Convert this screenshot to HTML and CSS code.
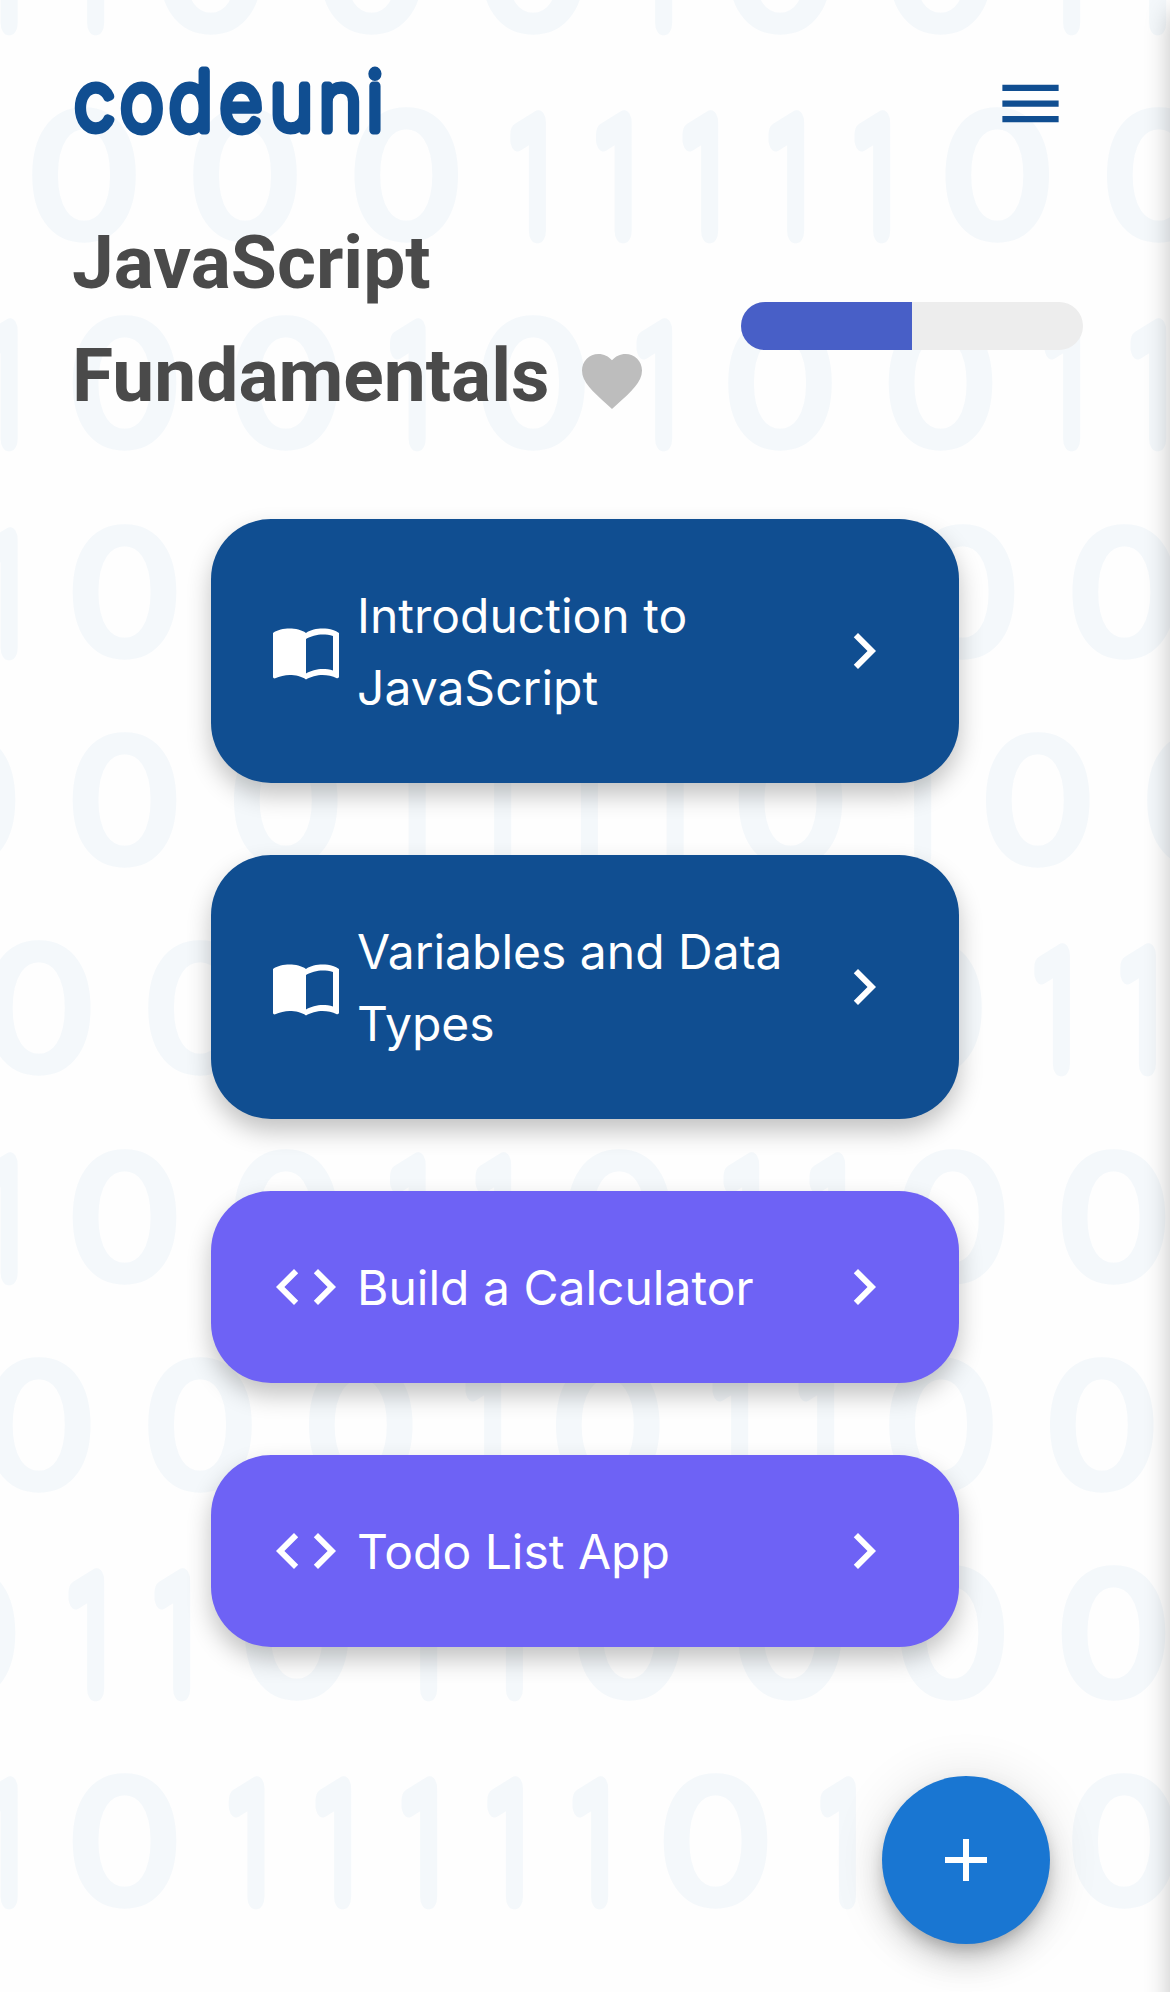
FILE: index.html
```html
<!DOCTYPE html>
<html lang="en">
<head>
<meta charset="utf-8">
<title>codeuni – JavaScript Fundamentals</title>
<link rel="stylesheet" href="styles.css">
</head>
<body>
<div class="page">
  <svg class="binary" viewBox="0 0 1170 1992" aria-hidden="true">
    <g transform="translate(0 24.7)"><text class="zero" x="180.9 318.3 456.4 667.5 804.8">00000</text><text class="one" x="27.5 171.7 1118.3 1798.3 1941.7">11111</text></g>
    <g transform="translate(0 233)"><text class="zero" x="72.6 210.3 348.1 853.2 991.2">00000</text><text class="one" x="907.7 1050.8 1195 1338.3 1481.7">11111</text></g>
    <g transform="translate(0 441.3)"><text class="zero" x="107.3 245 456.4 667.5 804.8">00000</text><text class="one" x="27.5 707.3 1118.3 1798.3 1941.7">11111</text></g>
    <g transform="translate(0 649.6)"><text class="zero" x="107.3 823.5 961.8">000</text><text class="one" x="27.5">1</text></g>
    <g transform="translate(0 857.9)"><text class="zero" x="-30.3 107.3 245 676.6 887.9 1025.6">000000</text><text class="one" x="707.3 850 994.3 1137.5 1550">11111</text></g>
    <g transform="translate(0 1066.2)"><text class="zero" x="34 171.8 795.7">000</text><text class="one" x="1781 1924.5">11</text></g>
    <g transform="translate(0 1274.5)"><text class="zero" x="107.3 245 529.9 815.2 952.6">00000</text><text class="one" x="27.5 707.3 850 1263.3 1406.7">11111</text></g>
    <g transform="translate(0 1482.8)"><text class="zero" x="34 171.8 309.1 520.3 805.1 942.5">000000</text><text class="one" x="833.3 1245 1388.3">111</text></g>
    <g transform="translate(0 1691.1)"><text class="zero" x="-30.3 254.4 538.5 675.9 814.8 952.6">000000</text><text class="one" x="171.7 315 726.7 869.3">1111</text></g>
    <g transform="translate(0 1899.4)"><text class="zero" x="107.3 612.5 961.5">000</text><text class="one" x="27.5 438.8 583 726.7 869.3 1011.7 1424.5">1111111</text></g>
  </svg>

  <header class="topbar">
    <svg class="logo" viewBox="0 0 306 72" role="img" aria-label="codeuni">
      <text class="logo-text" y="65.3" x="20.6 73.2 127.6 183.3 239.2 293.8 332.2">codeuni</text>
    </svg>
    <button class="menu" aria-label="Menu"><svg viewBox="0 0 24 24"><path d="M3 18h18v-2H3v2zm0-5h18v-2H3v2zm0-7v2h18V6H3z"/></svg></button>
  </header>

  <section class="heading">
    <h1 class="title">JavaScript Fundamentals <svg class="heart" viewBox="0 0 24 24"><path d="M12 21.35l-1.45-1.32C5.4 15.36 2 12.28 2 8.5 2 5.42 4.42 3 7.5 3c1.74 0 3.41.81 4.5 2.09C13.09 3.81 14.76 3 16.5 3 19.58 3 22 5.42 22 8.5c0 3.78-3.4 6.86-8.55 11.54L12 21.35z"/></svg></h1>
    <div class="progress"><div class="progress-value" style="width:50%"></div></div>
  </section>

  <main class="lessons">
    <a class="card reading">
      <svg class="icon" viewBox="0 0 24 24"><path d="M21 5c-1.11-.35-2.33-.5-3.5-.5-1.95 0-4.05.4-5.5 1.5-1.45-1.1-3.55-1.5-5.5-1.5S2.45 4.9 1 6v14.65c0 .25.25.5.5.5.1 0 .15-.05.25-.05C3.1 20.45 5.05 20 6.5 20c1.95 0 4.05.4 5.5 1.5 1.35-.85 3.8-1.5 5.5-1.5 1.65 0 3.35.3 4.75 1.05.1.05.15.05.25.05.25 0 .5-.25.5-.5V6c-.6-.45-1.25-.75-2-1zm0 13.5c-1.1-.35-2.3-.5-3.5-.5-1.7 0-4.15.65-5.5 1.5V8c1.35-.85 3.8-1.5 5.5-1.5 1.2 0 2.4.15 3.5.5v11.5z"/></svg>
      <span class="label">Introduction to JavaScript</span>
      <svg class="icon" viewBox="0 0 24 24"><path d="M10 6L8.59 7.41 13.17 12l-4.58 4.59L10 18l6-6z"/></svg>
    </a>
    <a class="card reading">
      <svg class="icon" viewBox="0 0 24 24"><path d="M21 5c-1.11-.35-2.33-.5-3.5-.5-1.95 0-4.05.4-5.5 1.5-1.45-1.1-3.55-1.5-5.5-1.5S2.45 4.9 1 6v14.65c0 .25.25.5.5.5.1 0 .15-.05.25-.05C3.1 20.45 5.05 20 6.5 20c1.95 0 4.05.4 5.5 1.5 1.35-.85 3.8-1.5 5.5-1.5 1.65 0 3.35.3 4.75 1.05.1.05.15.05.25.05.25 0 .5-.25.5-.5V6c-.6-.45-1.25-.75-2-1zm0 13.5c-1.1-.35-2.3-.5-3.5-.5-1.7 0-4.15.65-5.5 1.5V8c1.35-.85 3.8-1.5 5.5-1.5 1.2 0 2.4.15 3.5.5v11.5z"/></svg>
      <span class="label">Variables and Data Types</span>
      <svg class="icon" viewBox="0 0 24 24"><path d="M10 6L8.59 7.41 13.17 12l-4.58 4.59L10 18l6-6z"/></svg>
    </a>
    <a class="card project">
      <svg class="icon" viewBox="0 0 24 24"><path d="M9.4 16.6L4.8 12l4.6-4.6L8 6l-6 6 6 6 1.4-1.4zm5.2 0l4.6-4.6-4.6-4.6L16 6l6 6-6 6-1.4-1.4z"/></svg>
      <span class="label">Build a Calculator</span>
      <svg class="icon" viewBox="0 0 24 24"><path d="M10 6L8.59 7.41 13.17 12l-4.58 4.59L10 18l6-6z"/></svg>
    </a>
    <a class="card project">
      <svg class="icon" viewBox="0 0 24 24"><path d="M9.4 16.6L4.8 12l4.6-4.6L8 6l-6 6 6 6 1.4-1.4zm5.2 0l4.6-4.6-4.6-4.6L16 6l6 6-6 6-1.4-1.4z"/></svg>
      <span class="label">Todo List App</span>
      <svg class="icon" viewBox="0 0 24 24"><path d="M10 6L8.59 7.41 13.17 12l-4.58 4.59L10 18l6-6z"/></svg>
    </a>
  </main>

  <button class="fab" aria-label="Add"><svg class="icon" viewBox="0 0 24 24"><path d="M19 13h-6v6h-2v-6H5v-2h6V5h2v6h6v2z"/></svg></button>
  <div class="drawer-edge"></div>
</div>
</body>
</html>
```

FILE: styles.css
```css
* { box-sizing: border-box; }
body { margin: 0; background: #fefefe; }
button { border: 0; padding: 0; background: none; }
svg { display: block; fill: currentColor; }

.page {
  position: relative;
  width: 1170px;
  height: 1992px;
  overflow: hidden;
  font-family: Inter, "Liberation Sans", sans-serif;
}

/* Faint binary digits behind the content */
.binary {
  position: absolute;
  inset: 0;
  width: 1170px;
  height: 1992px;
  color: #f4f8fb;
}
.zero, .one {
  stroke: currentColor;
  stroke-width: 20px;
  stroke-linejoin: round;
  vector-effect: non-scaling-stroke;
}
.zero { font: 100 157px Inter, sans-serif; text-anchor: middle; transform: translate(-1px, -1px) scale(1.17, 1); }
.one { font: 100 152px Roboto, sans-serif; text-anchor: end; transform: translate(14.5px, -2px) scale(.6, 1); }

.topbar {
  position: relative;
  display: flex;
  justify-content: space-between;
  align-items: center;
  height: 207px;
  padding: 0 102.3px 0 76px;
  color: #104e91;
}
.logo { width: 306px; height: 72px; margin-bottom: 6px; overflow: visible; }
.logo-text {
  font: 200 81px Inter, sans-serif;
  text-anchor: middle;
  stroke: currentColor;
  stroke-width: 8.5px;
  stroke-linejoin: round;
  vector-effect: non-scaling-stroke;
  transform: scale(.9, 1);
}
.menu { width: 75px; height: 75px; color: inherit; }

.heading {
  position: relative;
  display: flex;
  justify-content: space-between;
  align-items: center;
  height: 238px;
  padding: 0 87px 0 72px;
}
.title {
  width: 600px;
  margin: 0 0 15px;
  font: 700 74.9px/113px Roboto, sans-serif;
  color: #4a4a4a;
}
.heart { display: inline-block; width: 72px; height: 72px; margin-left: 7.5px; vertical-align: -16px; color: #bdbdbd; }
.progress { width: 342px; height: 48px; border-radius: 24px; background: #ededed; overflow: hidden; }
.progress-value { height: 100%; background: #485fc7; }

.lessons {
  position: relative;
  display: flex;
  flex-direction: column;
  gap: 72px;
  width: 748px;
  margin: 74px auto 0;
}
.card {
  display: flex;
  align-items: center;
  gap: 15px;
  padding: 60px 59px;
  border-radius: 60px;
  color: #fff;
  box-shadow: 0 12px 24px rgba(0,0,0,.24);
}
.reading { background: #104e91; }
.project { background: #6e62f5; }
.icon { flex: none; width: 72px; height: 72px; }
.label { flex: 1; margin: 1px 0 -1px; font-size: 48px; line-height: 72px; }

.fab {
  position: absolute;
  right: 120px;
  bottom: 48px;
  display: grid;
  place-items: center;
  width: 168px;
  height: 168px;
  border-radius: 50%;
  color: #fff;
  background: #1976d2;
  box-shadow: 0 9px 15px -3px rgba(0,0,0,.2), 0 18px 30px rgba(0,0,0,.14), 0 3px 54px rgba(0,0,0,.12);
}

/* Shadow cast by the closed drawer beyond the right edge */
.drawer-edge {
  position: absolute;
  left: 1170px;
  top: 0;
  width: 300px;
  height: 2100px;
  box-shadow: 0 12px 24px rgba(0,0,0,.24);
}
```
